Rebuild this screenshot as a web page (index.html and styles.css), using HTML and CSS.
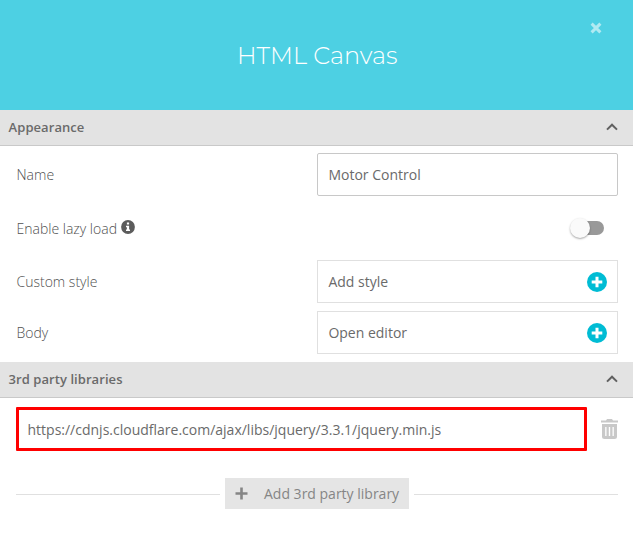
FILE: index.html
```
<!DOCTYPE html>
<html lang="en">
<head>
<meta charset="utf-8">
<title>HTML Canvas</title>
<link rel="stylesheet" href="styles.css">
</head>
<body>
<header class="header">
  <h1 class="title">HTML Canvas</h1>
  <svg class="close" viewBox="0 0 12 12"><path d="M1.600 1.600l8.800 8.800M10.400 1.600L1.600 10.400"/></svg>
</header>
<section>
  <div class="bar"><h2>Appearance</h2><svg class="chevron" viewBox="0 0 12 8"><path d="M1 6.6L6 1.7l5 4.9"/></svg></div>
  <div class="rows">
    <div class="row"><span class="label">Name</span><div class="field input">Motor Control</div></div>
    <div class="row lazy">
      <span class="label">Enable lazy load</span>
      <svg class="info" viewBox="0 0 14 14"><circle cx="7" cy="7" r="6.9"/><path d="M5.9 2.5h2.2v2H5.9zM5 5.7h3.1v3.9H9v1.5H5V9.6h.9V7.2H5z"/></svg>
      <div class="switch"><span class="knob"></span></div>
    </div>
    <div class="row"><span class="label">Custom style</span><div class="field"><span>Add style</span><svg class="add" viewBox="0 0 20 20"><circle cx="10" cy="10" r="10"/><path d="M10 4.7v10.6M4.7 10h10.6"/></svg></div></div>
    <div class="row last"><span class="label">Body</span><div class="field"><span>Open editor</span><svg class="add" viewBox="0 0 20 20"><circle cx="10" cy="10" r="10"/><path d="M10 4.7v10.6M4.7 10h10.6"/></svg></div></div>
  </div>
</section>
<section>
  <div class="bar"><h2>3rd party libraries</h2><svg class="chevron" viewBox="0 0 12 8"><path d="M1 6.6L6 1.7l5 4.9"/></svg></div>
  <div class="library">
    <div class="url">https://cdnjs.cloudflare.com/ajax/libs/jquery/3.3.1/jquery.min.js</div>
    <svg class="trash" viewBox="0 0 17 20"><path fill-rule="evenodd" d="M0 1.5h5L6 0h5l1 1.5h5v2H0zM1 5h15v12.5q0 2.500-2.500 2.500h-10Q1 20 1 17.500zM4.200 8v9h1.300V8zM7.800 8v9h1.400V8zM11.500 8v9h1.300V8z"/></svg>
  </div>
  <div class="divider">
    <button class="add-library" type="button"><svg class="plus" viewBox="0 0 13 13"><path d="M6.500 .5v12M.5 6.500h12"/></svg>Add 3rd party library</button>
  </div>
</section>
</body>
</html>
```
FILE: styles.css
```
* { box-sizing: border-box; }
body { margin: 0; background: #fff; color: #6a6a6a; font: 14px/20px "Open Sans", sans-serif; }
svg { display: block; flex: none; }
.header { position: relative; height: 110px; display: flex; align-items: center; justify-content: center; background: #4dd0e3; }
.title { margin: 0; padding: 2px 0 0 1.500px; color: #fff; font: 300 24px/32px Montserrat, "Open Sans", sans-serif; }
.close { position: absolute; top: 22px; right: 31px; width: 12px; height: 12px; fill: none; stroke: #b0eaf2; stroke-width: 3; }
.bar { display: flex; align-items: center; justify-content: space-between; height: 36px; padding: 0 15px 0 8.600px; background: #e3e3e3; border-bottom: 1px solid #c9c9c9; }
.bar h2 { margin: 0; padding-bottom: 2px; font-size: 13px; font-weight: 600; line-height: 20px; letter-spacing: 0.06px; }
.chevron { width: 12px; height: 8px; margin-bottom: 1px; fill: none; stroke: #606060; stroke-width: 2; }
.rows { padding: 7px 15px 8px 16.500px; }
.row { display: flex; align-items: center; height: 43px; }
.lazy { height: 50px; margin: 7px 0; }
.lazy .label { padding-top: 2px; }
.last { margin-top: 8px; }
.label { font-weight: 300; color: #505050; }
.field { display: flex; align-items: center; justify-content: space-between; width: 301px; height: 43px; margin-left: auto; padding: 0 10px 0 10.400px; border: 1px solid #e0e0e0; }
.input { border-color: #c8c8c8; border-radius: 2px; }
.info { width: 14px; height: 14px; margin: -3px 0 0 4.500px; }
.info circle { fill: #5c5c5c; }
.info path { fill: #fff; }
.switch { display: flex; align-items: center; width: 34px; height: 14px; margin-left: auto; margin-right: 14px; border-radius: 7px; background: linear-gradient(to right, transparent 10px, #999 10px); }
.knob { width: 20px; height: 20px; border-radius: 50%; background: #fafafa; box-shadow: 0 1px 2px rgba(0,0,0,.35); }
.add { width: 20px; height: 20px; }
.add circle { fill: #00bcd4; }
.add path { stroke: #fff; stroke-width: 3; }
.library { display: flex; align-items: center; justify-content: space-between; padding: 9px 15px 0 16px; }
.url { width: 571px; height: 44px; padding: 0 8.500px; border: 3px solid #f00; border-radius: 1px; line-height: 39px; }
.trash { width: 17px; height: 20px; fill: #c8c8c8; }
.divider { display: flex; align-items: center; gap: 5px; margin: 27px 15px 0 16px; }
.divider::before, .divider::after { content: ""; height: 1px; margin-top: 2px; background: #e0e0e0; flex: 1; }
.add-library { display: flex; align-items: center; width: 184px; height: 31px; padding: 0 0 0 10px; border: 0; background: #e5e5e5; color: #858585; font: inherit; white-space: nowrap; }
.plus { width: 13px; height: 13px; margin-right: 16px; fill: none; stroke: #858585; stroke-width: 2.600; }
```
